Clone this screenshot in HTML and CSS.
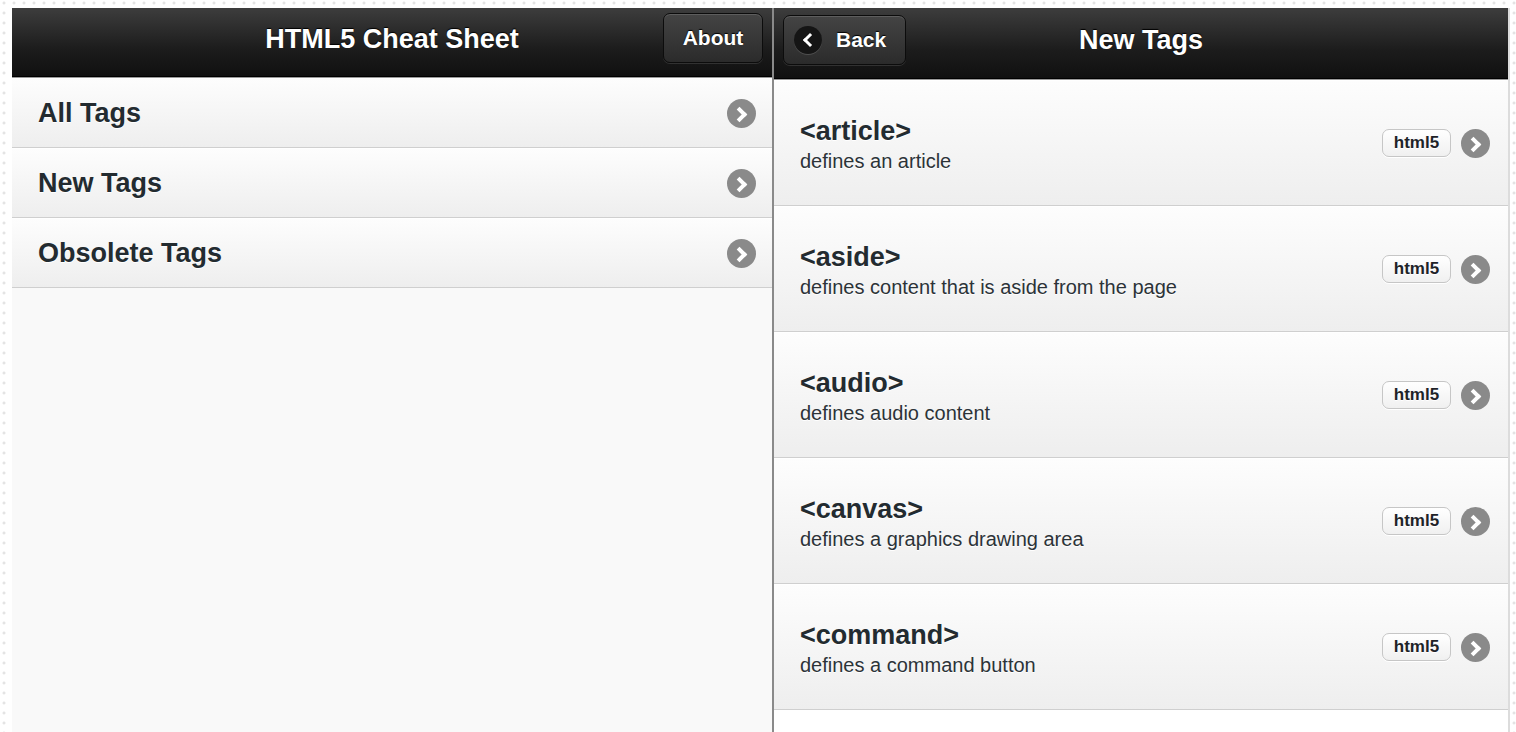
FILE: index.html
```html
<!DOCTYPE html>
<html lang="en">
<head>
<meta charset="utf-8">
<title>HTML5 Cheat Sheet</title>
<link rel="stylesheet" href="styles.css">
</head>
<body>
<div class="frame">
  <div class="app">
    <section class="panel panel-left">
      <header class="bar">
        <h1 class="bar-title">HTML5 Cheat Sheet</h1>
        <a class="btn btn-right">About</a>
      </header>
      <ul class="menu">
        <li class="menu-item"><span>All Tags</span><i class="arrow"></i></li>
        <li class="menu-item"><span>New Tags</span><i class="arrow"></i></li>
        <li class="menu-item"><span>Obsolete Tags</span><i class="arrow"></i></li>
      </ul>
    </section>
    <section class="panel panel-right">
      <header class="bar">
        <a class="btn btn-left"><i class="back-icon"></i>Back</a>
        <h1 class="bar-title">New Tags</h1>
      </header>
      <ul class="tags">
        <li class="tag-item">
          <div class="tag-text"><h3>&lt;article&gt;</h3><p>defines an article</p></div>
          <span class="badge">html5</span><i class="arrow"></i>
        </li>
        <li class="tag-item">
          <div class="tag-text"><h3>&lt;aside&gt;</h3><p>defines content that is aside from the page</p></div>
          <span class="badge">html5</span><i class="arrow"></i>
        </li>
        <li class="tag-item">
          <div class="tag-text"><h3>&lt;audio&gt;</h3><p>defines audio content</p></div>
          <span class="badge">html5</span><i class="arrow"></i>
        </li>
        <li class="tag-item">
          <div class="tag-text"><h3>&lt;canvas&gt;</h3><p>defines a graphics drawing area</p></div>
          <span class="badge">html5</span><i class="arrow"></i>
        </li>
        <li class="tag-item">
          <div class="tag-text"><h3>&lt;command&gt;</h3><p>defines a command button</p></div>
          <span class="badge">html5</span><i class="arrow"></i>
        </li>
        <li class="tag-item tag-item-next"></li>
      </ul>
    </section>
  </div>
</div>
</body>
</html>
```
FILE: styles.css
```css
* { box-sizing: border-box; }
html, body { margin: 0; padding: 0; }
body {
  width: 1516px;
  height: 732px;
  overflow: hidden;
  font-family: "Liberation Sans", Arial, Helvetica, sans-serif;
  background-color: #ffffff;
  background-image: radial-gradient(circle, #e4e4e4 1.2px, transparent 1.8px);
  background-size: 10px 10px;
  background-position: -1px -2px;
}
.frame {
  padding: 8px 6px 0 12px;
  height: 732px;
}
.app {
  display: flex;
  height: 724px;
  overflow: hidden;
}
.panel {
  display: flex;
  flex-direction: column;
  background: #f9f9f9;
}
.panel-left {
  width: 762px;
  border-right: 2px solid #8a8a8a;
}
.panel-right {
  width: 736px;
  border-right: 2px solid #dcdcdc;
}
.bar {
  position: relative;
  height: 71px;
  flex: none;
  display: flex;
  align-items: center;
  justify-content: center;
  background: linear-gradient(#3d3d3d, #1c1c1c 60%, #101010);
  border-bottom: 1px solid #000;
  box-shadow: 0 1px 0 #9a9a9a;
  margin-bottom: 1px;
}
.panel-left .bar { height: 69px; }
.bar-title {
  margin: 0 0 6px;
  color: #fff;
  font-size: 27px;
  font-weight: bold;
  text-shadow: 0 -1px 1px #000;
}
.btn {
  position: absolute;
  display: flex;
  align-items: center;
  height: 50px;
  color: #fff;
  font-size: 21px;
  font-weight: bold;
  text-shadow: 0 -1px 1px #000;
  background: linear-gradient(#444, #2b2b2b);
  border: 1px solid #0c0c0c;
  border-radius: 7px;
  box-shadow: inset 0 1px 0 rgba(255,255,255,0.14), 0 1px 0 rgba(255,255,255,0.12);
}
.btn-right {
  top: 5px;
  right: 9px;
  width: 100px;
  justify-content: center;
}
.btn-left {
  top: 7px;
  left: 9px;
  width: 123px;
  padding-left: 10px;
}
.back-icon {
  position: relative;
  width: 28px;
  height: 28px;
  border-radius: 50%;
  background: #151515;
  box-shadow: 0 1px 0 rgba(255,255,255,0.15);
  margin-right: 14px;
}
.back-icon::after {
  content: "";
  position: absolute;
  left: 11px;
  top: 9px;
  width: 7px;
  height: 7px;
  border-left: 3.5px solid #fff;
  border-bottom: 3.5px solid #fff;
  transform: rotate(45deg);
}
.menu, .tags {
  list-style: none;
  margin: 0;
  padding: 0;
}
.menu-item, .tag-item {
  display: flex;
  align-items: center;
  background: linear-gradient(#fdfdfd, #eeeeee);
  border-bottom: 1px solid #cfcfcf;
  border-top: 1px solid #fff;
  color: #232b30;
  text-shadow: 0 1px 0 #fff;
}
.menu-item {
  height: 70px;
  padding: 0 16px 0 26px;
  font-size: 27px;
  font-weight: bold;
}
.menu-item span { flex: 1; }
.arrow {
  position: relative;
  flex: none;
  width: 29px;
  height: 29px;
  border-radius: 50%;
  background: #8a8a8a;
}
.arrow::after {
  content: "";
  position: absolute;
  left: 7px;
  top: 10px;
  width: 7px;
  height: 7px;
  border-right: 4px solid #fff;
  border-top: 4px solid #fff;
  transform: rotate(45deg);
}
.tag-item {
  height: 126px;
  padding: 0 18px 0 26px;
}
.tag-item-next {
  background: #fff;
}
.tag-text { flex: 1; padding-top: 2px; }
.tag-text h3 {
  margin: 0 0 3px;
  font-size: 27px;
  font-weight: bold;
}
.tag-text p {
  margin: 0;
  font-size: 20px;
  color: #2c3338;
}
.badge {
  flex: none;
  width: 69px;
  height: 28px;
  display: flex;
  align-items: center;
  justify-content: center;
  margin-right: 10px;
  font-size: 17px;
  font-weight: bold;
  color: #1e2328;
  background: linear-gradient(#ffffff, #f0f0f0);
  border: 1px solid #c6c6c6;
  border-radius: 7px;
  box-shadow: 0 1px 0 #fff;
}
```
